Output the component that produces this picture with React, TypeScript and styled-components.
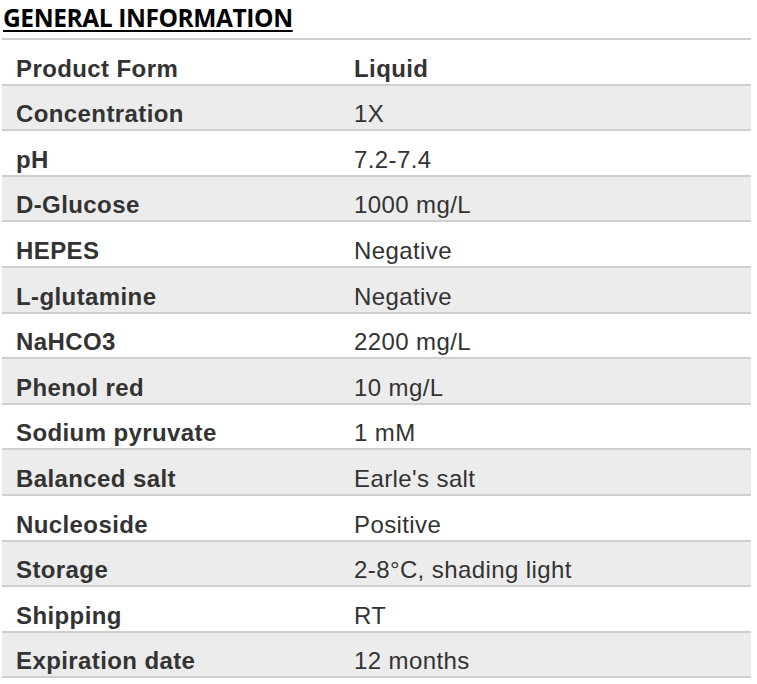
import React from "react";
import styled, { createGlobalStyle } from "styled-components";

const Global = createGlobalStyle`
  html, body { margin: 0; padding: 0; background: #fff; }
  body { font-family: "Liberation Sans", Arial, sans-serif; }
`;

const Page = styled.div`
  padding: 0 6px 0 2px;
  width: 749px;
`;

const Title = styled.h2`
  margin: 0;
  padding: 3px 0 0 1px;
  height: 38px;
  box-sizing: border-box;
  font-family: "Open Sans", "Liberation Sans", sans-serif;
  font-weight: 700;
  font-size: 24.5px;
  line-height: 30px;
  color: #000;
  text-decoration: underline;
  text-decoration-thickness: 2px;
  text-underline-offset: 3px;
  letter-spacing: -0.4px;
`;

const Table = styled.table`
  width: 749px;
  table-layout: fixed;
  border-collapse: collapse;
  border-top: 2px solid #cfcfcf;
`;

const Row = styled.tr<{ $shaded: boolean }>`
  background: ${(p) => (p.$shaded ? "#ececec" : "#fff")};
  border-bottom: 2px solid #cfcfcf;
  height: 45.6px;
`;

const Label = styled.td`
  width: 324px;
  padding: 0 0 2px 14px;
  font-size: 24px;
  line-height: 26px;
  letter-spacing: 0.4px;
  font-weight: 700;
  color: #333;
  vertical-align: bottom;
  white-space: nowrap;
`;

const Value = styled.td<{ $bold?: boolean }>`
  padding: 0 0 2px 14px;
  font-size: 24px;
  line-height: 26px;
  letter-spacing: 0.4px;
  font-weight: ${(p) => (p.$bold ? 700 : 400)};
  color: #333;
  vertical-align: bottom;
  white-space: nowrap;
`;

const rows: [string, string][] = [
  ["Product Form", "Liquid"],
  ["Concentration", "1X"],
  ["pH", "7.2-7.4"],
  ["D-Glucose", "1000 mg/L"],
  ["HEPES", "Negative"],
  ["L-glutamine", "Negative"],
  ["NaHCO3", "2200 mg/L"],
  ["Phenol red", "10 mg/L"],
  ["Sodium pyruvate", "1 mM"],
  ["Balanced salt", "Earle's salt"],
  ["Nucleoside", "Positive"],
  ["Storage", "2-8°C, shading light"],
  ["Shipping", "RT"],
  ["Expiration date", "12 months"],
];

export default function App() {
  return (
    <Page>
      <Global />
      <Title>GENERAL INFORMATION</Title>
      <Table>
        <tbody>
          {rows.map(([k, v], i) => (
            <Row key={k} $shaded={i % 2 === 1}>
              <Label>{k}</Label>
              <Value $bold={i === 0}>{v}</Value>
            </Row>
          ))}
        </tbody>
      </Table>
    </Page>
  );
}
